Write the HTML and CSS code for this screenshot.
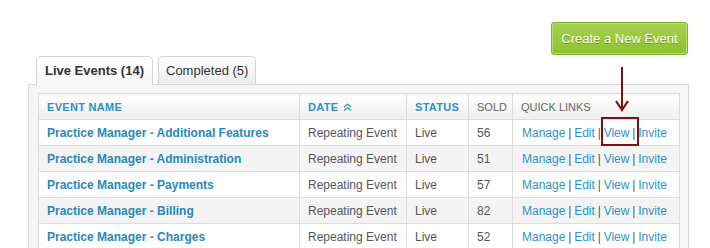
FILE: index.html
```html
<!DOCTYPE html>
<html lang="en">
<head>
<meta charset="UTF-8">
<link rel="stylesheet" href="styles.css">
<title>Events</title>
</head>
<body>
  <div class="wrap">
    <div class="top">
      <a class="btn-create" href="#">Create a New Event</a>
    </div>

    <div class="tabs">
      <div class="tab active">Live Events (14)</div>
      <div class="tab">Completed (5)</div>
    </div>

    <div class="panel">
      <table class="events">
        <colgroup>
          <col class="c-name">
          <col class="c-date">
          <col class="c-status">
          <col class="c-sold">
          <col class="c-links">
        </colgroup>
        <thead>
          <tr>
            <th class="sort">Event Name</th>
            <th class="sort">Date
              <svg class="caret" width="9" height="8" viewBox="0 0 9 8">
                <polyline points="1,4 4.5,1 8,4" fill="none" stroke="#2a92c2" stroke-width="1.2"/>
                <polyline points="1,7.5 4.5,4.5 8,7.5" fill="none" stroke="#2a92c2" stroke-width="1.2"/>
              </svg>
            </th>
            <th class="sort">Status</th>
            <th>Sold</th>
            <th>Quick Links</th>
          </tr>
        </thead>
        <tbody>
          <tr>
            <td><a class="name" href="#">Practice Manager - Additional Features</a></td>
            <td>Repeating Event</td><td>Live</td><td>56</td>
            <td class="links"><a href="#">Manage</a> | <a href="#">Edit</a> | <a href="#">View</a> | <a href="#">Invite</a></td>
          </tr>
          <tr>
            <td><a class="name" href="#">Practice Manager - Administration</a></td>
            <td>Repeating Event</td><td>Live</td><td>51</td>
            <td class="links"><a href="#">Manage</a> | <a href="#">Edit</a> | <a href="#">View</a> | <a href="#">Invite</a></td>
          </tr>
          <tr>
            <td><a class="name" href="#">Practice Manager - Payments</a></td>
            <td>Repeating Event</td><td>Live</td><td>57</td>
            <td class="links"><a href="#">Manage</a> | <a href="#">Edit</a> | <a href="#">View</a> | <a href="#">Invite</a></td>
          </tr>
          <tr>
            <td><a class="name" href="#">Practice Manager - Billing</a></td>
            <td>Repeating Event</td><td>Live</td><td>82</td>
            <td class="links"><a href="#">Manage</a> | <a href="#">Edit</a> | <a href="#">View</a> | <a href="#">Invite</a></td>
          </tr>
          <tr>
            <td><a class="name" href="#">Practice Manager - Charges</a></td>
            <td>Repeating Event</td><td>Live</td><td>52</td>
            <td class="links"><a href="#">Manage</a> | <a href="#">Edit</a> | <a href="#">View</a> | <a href="#">Invite</a></td>
          </tr>
        </tbody>
      </table>
    </div>

    <!-- annotation: arrow pointing at the View link -->
    <svg class="arrow" width="20" height="46" viewBox="0 0 20 46">
      <line x1="10" y1="0" x2="10" y2="42" stroke="#7b1113" stroke-width="2"/>
      <polyline points="4,34 10,43 16,34" fill="none" stroke="#7b1113" stroke-width="2.2"/>
    </svg>
    <div class="highlight"></div>
  </div>
</body>
</html>
```

FILE: styles.css
```css
body {
  margin: 0;
  background: #fff;
  font-family: "Liberation Sans", Arial, sans-serif;
  font-size: 12px;
  color: #555;
}

.wrap {
  position: relative;
  width: 661px;
  margin-left: 28px;
}

.top {
  display: flex;
  justify-content: flex-end;
  padding-top: 22px;
  padding-right: 1px;
}

.btn-create {
  display: block;
  width: 135px;
  height: 31px;
  line-height: 31px;
  text-align: center;
  color: #fff;
  font-size: 13px;
  text-decoration: none;
  background: linear-gradient(#a6d14f, #8cc22d);
  border: 1px solid #7fae30;
  border-radius: 3px;
  box-shadow: inset 0 0 0 1px #b9dc72;
  text-shadow: 0 1px 0 #6f9c24;
}

/* tabs */
.tabs {
  display: flex;
  gap: 5px;
  margin: 1px 0 0 8px;
}

.tab {
  height: 27px;
  line-height: 28px;
  padding: 0 7px;
  font-size: 13px;
  color: #333;
  border: 1px solid #d4d4d4;
  border-bottom: none;
  border-radius: 5px 5px 0 0;
  background: linear-gradient(#fff, #ececec);
}

.tab.active {
  font-weight: bold;
  padding: 0 8px;
  background: linear-gradient(#fff, #f6f6f6);
  position: relative;
  z-index: 1;
  height: 28px;
  margin-bottom: -1px;
}

.panel {
  border: 1px solid #d9d9d9;
  background: #f6f6f6;
  padding: 8px 9px 20px 9px;
}

/* table */
.events {
  width: 642px;
  table-layout: fixed;
  border-collapse: collapse;
  background: #fff;
}

.c-name { width: 261px; }
.c-date { width: 107px; }
.c-status { width: 62px; }
.c-sold { width: 44px; }

.events th,
.events td {
  border: 1px solid #dcdcdc;
  height: 25px;
  padding: 0 8px;
  text-align: left;
  white-space: nowrap;
  overflow: hidden;
}

.events th {
  font-size: 11px;
  font-weight: normal;
  text-transform: uppercase;
  color: #666;
  background: linear-gradient(#fff, #eeeeee);
}

.events th.sort {
  font-weight: bold;
  color: #2a92c2;
  letter-spacing: 0.3px;
}

.caret {
  margin-left: 1px;
  vertical-align: 0;
}

.events tbody tr:nth-child(even) td {
  background: #f4f4f4;
}

.events a {
  color: #2b93c8;
  text-decoration: none;
}

.events a.name {
  font-weight: bold;
  color: #2788bb;
}

.events td.links {
  padding-left: 9px;
  color: #555;
  word-spacing: -0.5px;
}

/* annotation overlay */
.arrow {
  position: absolute;
  left: 584px;
  top: 67px;
}

.highlight {
  position: absolute;
  left: 573px;
  top: 117px;
  width: 34px;
  height: 25px;
  border: 2px solid #7b1113;
}
```
